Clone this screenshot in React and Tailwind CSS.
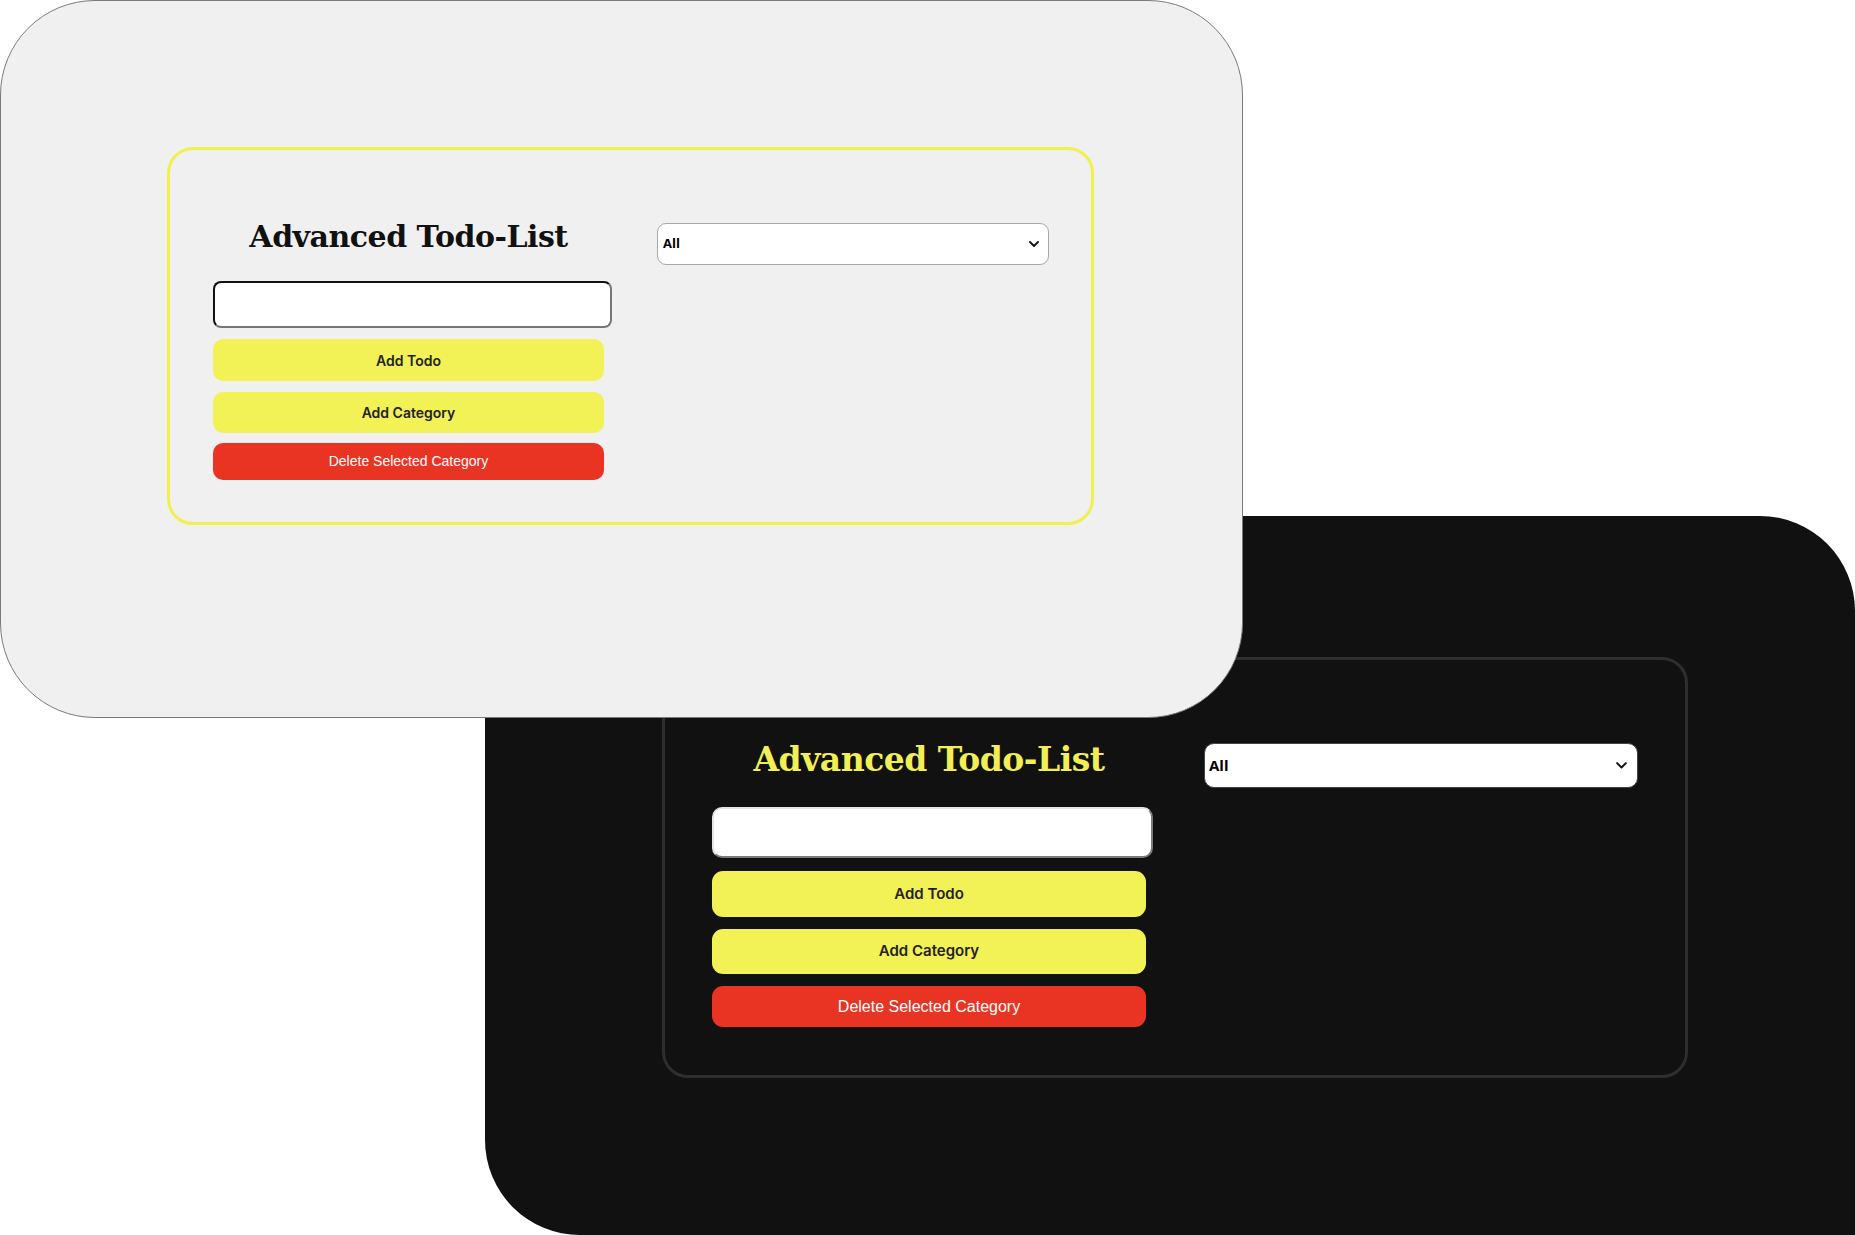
import React from "react";

function Chevron({ size = 10 }) {
  return (
    <svg width={size} height={size * 0.6} viewBox="0 0 10 6" fill="none">
      <path d="M1 1l4 4 4-4" stroke="#111" strokeWidth="1.8" strokeLinecap="round" strokeLinejoin="round" />
    </svg>
  );
}

export default function App() {
  return (
    <div className="relative w-[1855px] h-[1235px] bg-white overflow-hidden">
      {/* Dark window */}
      <div className="absolute left-[485px] top-[516px] w-[1370px] h-[719px] bg-[#111111] rounded-[95px] rounded-br-none pl-[177px] pt-[141px]">
        <div className="w-[1026px] h-[421px] border-[3px] border-[#2e2e2e] rounded-[26px] flex gap-[58px] pl-[47px] pt-[78px]">
          <div className="flex flex-col w-[434px]">
            <div className="h-[44px] leading-[44px] text-center text-[33px] font-bold tracking-[-0.5px] text-[#f2ef55] [font-family:'DejaVu_Serif',serif]">
              Advanced Todo-List
            </div>
            <div className="mt-[25px] w-[441px] h-[51px] bg-white rounded-[10px] border-2 border-t-[#e5e5e5] border-l-[#e5e5e5] border-b-[#7a7a7a] border-r-[#7a7a7a]" />
            <div className="mt-[13px] h-[46px] rounded-[11px] bg-[#f2f155] flex items-center justify-center text-[15px] font-semibold text-[#222] [font-family:Inter,sans-serif]">
              Add Todo
            </div>
            <div className="mt-[12px] h-[45px] rounded-[11px] bg-[#f2f155] flex items-center justify-center text-[15px] font-semibold text-[#222] [font-family:Inter,sans-serif]">
              Add Category
            </div>
            <div className="mt-[12px] h-[41px] rounded-[11px] bg-[#e93323] flex items-center justify-center text-[16px] text-white [font-family:'Liberation_Sans',sans-serif]">
              Delete Selected Category
            </div>
          </div>
          <div className="mt-[5px] w-[434px] h-[45px] bg-white rounded-[10px] border border-[#444] flex items-center justify-between pl-[4px] pr-[10px]">
            <span className="text-[15px] font-bold text-black [font-family:'Open_Sans',sans-serif]">All</span>
            <Chevron size={11} />
          </div>
        </div>
      </div>

      {/* Light window */}
      <div className="absolute left-0 top-0 w-[1243px] h-[718px] bg-[#f0f0f0] border border-[#7a7a7a] rounded-[95px] pl-[166px] pt-[146px]">
        <div className="w-[927px] h-[378px] border-[3px] border-[#f2ef50] rounded-[26px] flex gap-[53px] pl-[43px] pt-[67px]">
          <div className="flex flex-col w-[391px]">
            <div className="h-[40px] leading-[40px] text-center text-[30px] font-bold tracking-[-0.5px] text-[#111] [font-family:'DejaVu_Serif',serif]">
              Advanced Todo-List
            </div>
            <div className="mt-[24px] w-[399px] h-[47px] bg-white rounded-[8px] border-2 border-t-[#111] border-l-[#111] border-b-[#777] border-r-[#777]" />
            <div className="mt-[11px] h-[42px] rounded-[10px] bg-[#f2f155] flex items-center justify-center text-[14px] font-semibold text-[#222] [font-family:Inter,sans-serif]">
              Add Todo
            </div>
            <div className="mt-[11px] h-[41px] rounded-[10px] bg-[#f2f155] flex items-center justify-center text-[14px] font-semibold text-[#222] [font-family:Inter,sans-serif]">
              Add Category
            </div>
            <div className="mt-[10px] h-[37px] rounded-[10px] bg-[#e93323] flex items-center justify-center text-[14px] text-white [font-family:'Liberation_Sans',sans-serif]">
              Delete Selected Category
            </div>
          </div>
          <div className="mt-[6px] w-[392px] h-[42px] bg-white rounded-[9px] border border-[#a8a8a8] flex items-center justify-between pl-[5px] pr-[9px]">
            <span className="text-[13px] font-bold text-black [font-family:'Open_Sans',sans-serif]">All</span>
            <Chevron size={10} />
          </div>
        </div>
      </div>
    </div>
  );
}
